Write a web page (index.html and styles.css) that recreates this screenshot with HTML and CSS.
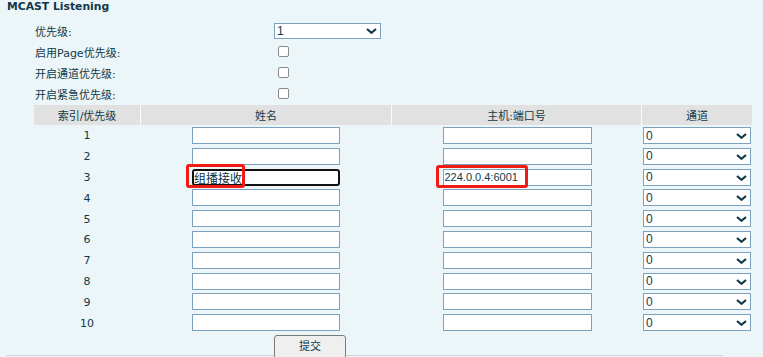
FILE: index.html
```html
<!DOCTYPE html>
<html>
<head>
<meta charset="utf-8">
<link rel="stylesheet" href="styles.css">
</head>
<body>
<div class="page">
  <div class="title">MCAST Listening</div>
  <div class="settings">
    <div class="lbl">优先级:</div>
    <div class="ctl">
      <div class="selwrap sel-top">
        <select class="sel"><option>1</option></select>
        <svg class="chev" width="11" height="6" viewBox="0 0 11 6"><polyline points="1,1 5.5,4.8 10,1" fill="none" stroke="#12394a" stroke-width="2.2"/></svg>
      </div>
    </div>
    <div class="lbl">启用Page优先级:</div>
    <div class="ctl"><input type="checkbox" class="chk"></div>
    <div class="lbl">开启通道优先级:</div>
    <div class="ctl"><input type="checkbox" class="chk"></div>
    <div class="lbl">开启紧急优先级:</div>
    <div class="ctl"><input type="checkbox" class="chk"></div>
  </div>

  <div class="tbl">
    <div class="th">索引/优先级</div>
    <div class="th">姓名</div>
    <div class="th">主机:端口号</div>
    <div class="th last">通道</div>

    <div class="td idx">1</div><div class="td"><input class="txt name" type="text"></div><div class="td"><input class="txt host" type="text"></div><div class="td ch"><div class="selwrap sel-ch"><select class="sel"><option>0</option></select><svg class="chev" width="11" height="6" viewBox="0 0 11 6"><polyline points="1,1 5.5,4.8 10,1" fill="none" stroke="#12394a" stroke-width="2.2"/></svg></div></div>
    <div class="td idx">2</div><div class="td"><input class="txt name" type="text"></div><div class="td"><input class="txt host" type="text"></div><div class="td ch"><div class="selwrap sel-ch"><select class="sel"><option>0</option></select><svg class="chev" width="11" height="6" viewBox="0 0 11 6"><polyline points="1,1 5.5,4.8 10,1" fill="none" stroke="#12394a" stroke-width="2.2"/></svg></div></div>
    <div class="td idx">3</div><div class="td"><input class="txt name focus" type="text" value="组播接收"></div><div class="td"><input class="txt host" type="text" value="224.0.0.4:6001"></div><div class="td ch"><div class="selwrap sel-ch"><select class="sel"><option>0</option></select><svg class="chev" width="11" height="6" viewBox="0 0 11 6"><polyline points="1,1 5.5,4.8 10,1" fill="none" stroke="#12394a" stroke-width="2.2"/></svg></div></div>
    <div class="td idx">4</div><div class="td"><input class="txt name" type="text"></div><div class="td"><input class="txt host" type="text"></div><div class="td ch"><div class="selwrap sel-ch"><select class="sel"><option>0</option></select><svg class="chev" width="11" height="6" viewBox="0 0 11 6"><polyline points="1,1 5.5,4.8 10,1" fill="none" stroke="#12394a" stroke-width="2.2"/></svg></div></div>
    <div class="td idx">5</div><div class="td"><input class="txt name" type="text"></div><div class="td"><input class="txt host" type="text"></div><div class="td ch"><div class="selwrap sel-ch"><select class="sel"><option>0</option></select><svg class="chev" width="11" height="6" viewBox="0 0 11 6"><polyline points="1,1 5.5,4.8 10,1" fill="none" stroke="#12394a" stroke-width="2.2"/></svg></div></div>
    <div class="td idx">6</div><div class="td"><input class="txt name" type="text"></div><div class="td"><input class="txt host" type="text"></div><div class="td ch"><div class="selwrap sel-ch"><select class="sel"><option>0</option></select><svg class="chev" width="11" height="6" viewBox="0 0 11 6"><polyline points="1,1 5.5,4.8 10,1" fill="none" stroke="#12394a" stroke-width="2.2"/></svg></div></div>
    <div class="td idx">7</div><div class="td"><input class="txt name" type="text"></div><div class="td"><input class="txt host" type="text"></div><div class="td ch"><div class="selwrap sel-ch"><select class="sel"><option>0</option></select><svg class="chev" width="11" height="6" viewBox="0 0 11 6"><polyline points="1,1 5.5,4.8 10,1" fill="none" stroke="#12394a" stroke-width="2.2"/></svg></div></div>
    <div class="td idx">8</div><div class="td"><input class="txt name" type="text"></div><div class="td"><input class="txt host" type="text"></div><div class="td ch"><div class="selwrap sel-ch"><select class="sel"><option>0</option></select><svg class="chev" width="11" height="6" viewBox="0 0 11 6"><polyline points="1,1 5.5,4.8 10,1" fill="none" stroke="#12394a" stroke-width="2.2"/></svg></div></div>
    <div class="td idx">9</div><div class="td"><input class="txt name" type="text"></div><div class="td"><input class="txt host" type="text"></div><div class="td ch"><div class="selwrap sel-ch"><select class="sel"><option>0</option></select><svg class="chev" width="11" height="6" viewBox="0 0 11 6"><polyline points="1,1 5.5,4.8 10,1" fill="none" stroke="#12394a" stroke-width="2.2"/></svg></div></div>
    <div class="td idx">10</div><div class="td"><input class="txt name" type="text"></div><div class="td"><input class="txt host" type="text"></div><div class="td ch"><div class="selwrap sel-ch"><select class="sel"><option>0</option></select><svg class="chev" width="11" height="6" viewBox="0 0 11 6"><polyline points="1,1 5.5,4.8 10,1" fill="none" stroke="#12394a" stroke-width="2.2"/></svg></div></div>
  </div>

  <div class="actions"><button class="btn" type="button">提交</button></div>
  <div class="rule"></div>

  <div class="mark mark-name"></div>
  <div class="mark mark-host"></div>
</div>
</body>
</html>
```

FILE: styles.css
```css
html, body {
  margin: 0;
  padding: 0;
  background: #ecf5f8;
}
body {
  width: 763px;
  height: 357px;
  overflow: hidden;
  font-family: "DejaVu Sans", "Noto Sans CJK SC", sans-serif;
  font-size: 11px;
  color: #0f3a4a;
}
.page {
  position: relative;
  height: 357px;
}
.title {
  height: 20px;
  line-height: 13px;
  padding-left: 7px;
  font-size: 10.8px;
  font-weight: bold;
  color: #10384a;
}
.settings {
  display: grid;
  grid-template-columns: 239px 1fr;
  grid-auto-rows: 21px;
  margin-left: 35px;
}
.lbl, .ctl {
  display: flex;
  align-items: center;
}
.chk {
  appearance: none;
  -webkit-appearance: none;
  width: 11px;
  height: 11px;
  margin: 0 0 0 4px;
  border: 1px solid #8a8a8a;
  border-radius: 2px;
  background: #fff;
  box-sizing: border-box;
}
.selwrap {
  position: relative;
  display: flex;
}
.sel {
  appearance: none;
  -webkit-appearance: none;
  box-sizing: border-box;
  height: 16px;
  margin: 0;
  padding: 0 0 0 2px;
  border: 1px solid #7ba1bc;
  border-radius: 0;
  background: #fff;
  font-family: "Liberation Sans", "Noto Sans CJK SC", sans-serif;
  font-size: 12px;
  color: #0f3a4a;
  line-height: 14px;
}
.sel-top .sel {
  width: 107px;
}
.sel-ch .sel {
  width: 108px;
  height: 17px;
}
.chev {
  position: absolute;
  right: 4px;
  top: 5px;
  pointer-events: none;
}
.sel-ch .chev {
  top: 6px;
}
.tbl {
  display: grid;
  grid-template-columns: 107px 251px 250px 110px;
  grid-template-rows: 20px;
  grid-auto-rows: 20.8px;
  margin: 1px 0 0 34px;
  width: 718px;
}
.th {
  background: #e1e1e1;
  border-right: 1px solid #fbfdfd;
  display: flex;
  align-items: center;
  justify-content: center;
  font-size: 11px;
}
.th.last {
  border-right: 0;
}
.td {
  display: flex;
  justify-content: center;
  align-items: flex-start;
  padding-top: 2px;
  box-sizing: border-box;
}
.td.idx {
  padding-right: 1px;
  align-items: center;
  padding-top: 1px;
}
.td.ch {
  justify-content: flex-start;
  padding-left: 1px;
}
.txt {
  box-sizing: border-box;
  height: 17px;
  margin: 0;
  padding: 0 0 0 1px;
  border: 1px solid #7ba1bc;
  border-radius: 0;
  background: #fff;
  font-family: "Liberation Sans", "Noto Sans CJK SC", sans-serif;
  font-size: 11px;
  color: #0f3a4a;
  outline: none;
}
.txt.name {
  width: 148px;
  margin-right: 1px;
}
.txt.host {
  width: 149px;
}
.txt.focus {
  border: 2px solid #111;
  border-radius: 3px;
  padding-left: 0;
  font-size: 12px;
  color: #0d3040;
}
.actions {
  height: 20px;
  padding: 2px 0 0 274px;
}
.btn {
  width: 72px;
  height: 24px;
  margin: 0;
  padding: 0 0 3px 0;
  border: 1px solid #7a7a7a;
  border-radius: 3px;
  background: #efefef;
  font-family: "DejaVu Sans", "Noto Sans CJK SC", sans-serif;
  font-size: 11px;
  color: #0f3a4a;
  position: relative;
  z-index: 1;
}
.rule {
  margin-left: 6px;
  width: 717px;
  border-top: 1px solid #cdd6d9;
}
.mark {
  position: absolute;
  box-sizing: border-box;
  border: 3px solid #f01c14;
  border-radius: 3px;
  pointer-events: none;
}
.mark-name {
  left: 186px;
  top: 164px;
  width: 59px;
  height: 24px;
}
.mark-host {
  left: 436px;
  top: 165px;
  width: 92px;
  height: 23px;
}
```
